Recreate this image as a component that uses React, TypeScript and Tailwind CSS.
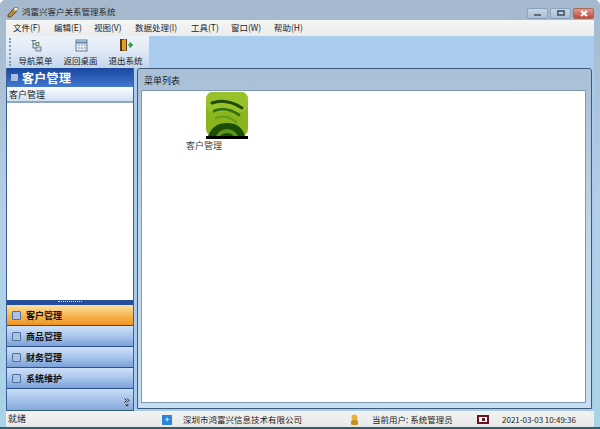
import React from "react";

const F = { fontFamily: '"Noto Sans CJK SC", "Liberation Sans", sans-serif' };

function Menu({ t, w }: { t: string; w: string }) {
  return <span className={`${w} text-[8.5px] leading-[15px] text-[#222] whitespace-nowrap`}>{t}</span>;
}

function Tool({ label, children }: { label: string; children: React.ReactNode }) {
  return (
    <div className="flex w-[45px] flex-col items-center">
      <div className="flex h-[14px] items-end justify-center">{children}</div>
      <span className="mt-[2px] text-[8.5px] leading-[12px] text-[#222] whitespace-nowrap">{label}</span>
    </div>
  );
}

function NavItem({ label, active }: { label: string; active?: boolean }) {
  return (
    <div
      className={`flex h-[21px] items-center border-b border-[#2a4f8f] pl-[5px] ${
        active
          ? "bg-gradient-to-b from-[#fde0a0] via-[#f8b850] to-[#ee9420]"
          : "bg-gradient-to-b from-[#cfe1f8] via-[#a9c6ec] to-[#7ba1da]"
      }`}
    >
      <span className="h-[9px] w-[9px] rounded-[1px] border border-[#4f709f] bg-[#a9c3e4]" />
      <span className="ml-[5px] text-[9px] font-bold leading-none text-[#111]">{label}</span>
    </div>
  );
}

export default function App() {
  return (
    <div style={F} className="flex h-[429px] w-[600px] flex-col overflow-hidden rounded-t-[5px] border-b-2 border-[#2f5f6e] bg-gradient-to-b from-[#a5b8cd] via-[#b4cfe6] to-[#a8d3e8]">
      {/* title bar */}
      <div className="flex h-[20px] shrink-0 items-center pl-[7px] pr-[6px] pt-[3px]">
        <svg width="12" height="12" viewBox="0 0 12 12" className="shrink-0">
          <path d="M1 9 L7 2 L11 2 L10 5 L4 11 L1 11 Z" fill="#b98a3c" stroke="#4a3a20" strokeWidth="0.8" />
          <path d="M7 2 L11 2 L10 5 L7.5 4.5 Z" fill="#e8e4d8" />
        </svg>
        <span className="ml-[3px] text-[8.5px] leading-none text-[#2a2a2a]">鸿富兴客户关系管理系统</span>
        <div className="ml-auto flex items-center gap-[2px] pt-[3px]">
          <div className="flex h-[11px] w-[21px] items-center justify-center rounded-[2px] border border-[#8ca3bd] bg-gradient-to-b from-[#c8d6e6] to-[#a9bdd2]">
            <span className="mt-[3px] h-[2px] w-[7px] bg-[#5a6a7c]" />
          </div>
          <div className="flex h-[11px] w-[21px] items-center justify-center rounded-[2px] border border-[#8ca3bd] bg-gradient-to-b from-[#c8d6e6] to-[#a9bdd2]">
            <span className="h-[6px] w-[8px] border-2 border-[#5a6a7c] bg-[#c8d6e6]" />
          </div>
          <div className="flex h-[11px] w-[21px] items-center justify-center rounded-[2px] border border-[#a8685c] bg-gradient-to-b from-[#e09a8e] to-[#c0493b]">
            <svg width="8" height="7" viewBox="0 0 8 7">
              <path d="M1 1 L7 6 M7 1 L1 6" stroke="#fff" strokeWidth="2" />
            </svg>
          </div>
        </div>
      </div>

      <div className="flex min-h-0 flex-1 flex-col pl-[6px] pr-[6px]">
        {/* menu */}
        <div className="flex h-[16px] shrink-0 bg-gradient-to-b from-[#f5f5f5] to-[#ececec] pl-[7px]">
          <Menu t="文件(F)" w="w-[41px]" />
          <Menu t="编辑(E)" w="w-[40px]" />
          <Menu t="视图(V)" w="w-[41px]" />
          <Menu t="数据处理(I)" w="w-[56px]" />
          <Menu t="工具(T)" w="w-[40px]" />
          <Menu t="窗口(W)" w="w-[43px]" />
          <Menu t="帮助(H)" w="w-[40px]" />
        </div>

        {/* toolbar */}
        <div className="flex h-[32px] shrink-0 bg-[#a9cbee]">
          <div className="flex w-[143px] bg-gradient-to-b from-[#eef3f9] via-[#dfe9f5] to-[#c0d5ec] pl-[1px]">
            <div className="my-[2px] ml-[2px] w-0 border-l-2 border-dotted border-[#8a9ab0]" />
            <div className="ml-[2px] flex pt-[2px]">
              <Tool label="导航菜单">
                <svg width="13" height="13" viewBox="0 0 13 13" className="ml-[2px]">
                  <path d="M1.5 1.5 H6 M3 1.5 V9 H6 M3 5 H6" fill="none" stroke="#5b6f80" strokeWidth="1" />
                  <rect x="6" y="3.5" width="3" height="3" fill="#d8e2d0" stroke="#5b7a58" strokeWidth="0.8" />
                  <rect x="6" y="8" width="5" height="4" fill="#c9dbe8" stroke="#4f6f88" strokeWidth="0.8" />
                </svg>
              </Tool>
              <Tool label="返回桌面">
                <svg width="13" height="13" viewBox="0 0 13 13" className="ml-[1px]">
                  <rect x="1" y="1" width="11" height="11" fill="#e6eef5" stroke="#5f7f9c" />
                  <path d="M1 3.5 H12" stroke="#5f86ad" strokeWidth="2" />
                  <path d="M3 6 h1.5 M6 6 h1.5 M9 6 h1.5 M3 9 h1.5 M6 9 h1.5 M9 9 h1.5" stroke="#6d7d8c" strokeWidth="1.2" />
                </svg>
              </Tool>
              <Tool label="退出系统">
                <svg width="14" height="14" viewBox="0 0 14 14" className="ml-[1px]">
                  <rect x="1" y="1" width="7" height="12" fill="#5a3a14" />
                  <path d="M3 2 L7 1 V13 L3 12 Z" fill="#e0a030" />
                  <path d="M9 7 H12 M10.5 4.5 L13 7 L10.5 9.5" fill="none" stroke="#2f9a3c" strokeWidth="1.6" />
                </svg>
              </Tool>
            </div>
          </div>
        </div>

        {/* main */}
        <div className="flex min-h-0 flex-1 bg-[#a9cbee]">
          {/* left */}
          <div className="flex w-[128px] shrink-0 flex-col border-x border-[#3b5f96] bg-white">
            <div className="flex h-[19px] shrink-0 items-center bg-gradient-to-b from-[#1c479f] via-[#2c5fb8] to-[#4379cf] pl-[4px]">
              <span className="h-[7px] w-[7px] bg-[#a9bfe0]" />
              <span className="ml-[4px] text-[12px] font-bold tracking-[0.3px] leading-none text-white">客户管理</span>
            </div>
            <div className="h-[16px] shrink-0 border-b-2 border-[#8ea6c4] bg-gradient-to-b from-[#ffffff] to-[#cfe0f2] pl-[2px] text-[9px] leading-[15px] text-[#222]">
              客户管理
            </div>
            <div className="min-h-0 flex-1 bg-white" />
            <div className="flex h-[5px] shrink-0 items-start justify-center bg-[#234f9e] pt-[1px]">
              <div className="h-[1px] w-[24px] border-t border-dotted border-[#dfe9f7]" />
            </div>
            <NavItem label="客户管理" active />
            <NavItem label="商品管理" />
            <NavItem label="财务管理" />
            <NavItem label="系统维护" />
            <div className="flex h-[22px] shrink-0 items-end justify-end border-b border-[#2f5f6e] bg-gradient-to-b from-[#c9ddf6] to-[#86a9dd] pb-[3px] pr-[3px]">
              <svg width="6" height="9" viewBox="0 0 6 9">
                <path d="M0.5 0.5 L2.5 2.5 L0.5 4.5 M3 0.5 L5 2.5 L3 4.5" fill="none" stroke="#222" strokeWidth="1" />
                <path d="M1 6.5 H5 L3 8.5 Z" fill="#222" />
              </svg>
            </div>
          </div>

          {/* right */}
          <div className="ml-[3px] mr-[2px] mb-[2px] flex min-w-0 flex-1 flex-col rounded-t-[3px] border border-[#3f5a78] bg-gradient-to-b from-[#a9bfd6] via-[#c3d6ea] to-[#c8ddf2] pl-[3px] pr-[5px] pb-[5px]">
            <div className="h-[21px] shrink-0 pl-[3px] text-[9px] leading-[23px] text-[#222]">菜单列表</div>
            <div className="relative min-h-0 flex-1 border border-[#7f98b4] bg-white">
              <div className="absolute left-[64px] top-[1px] flex w-[42px] flex-col items-center">
                <svg width="42" height="47" viewBox="0 0 42 47">
                  <rect x="0" y="0" width="42" height="44" rx="7" fill="#8ab51f" />
                  <rect x="0" y="0" width="42" height="20" rx="7" fill="#98c22c" />
                  <path d="M6 11 Q20 6 36 16" fill="none" stroke="#1f4d06" strokeWidth="3" strokeLinecap="round" />
                  <path d="M8 19 Q20 14 33 23" fill="none" stroke="#356f10" strokeWidth="2.8" strokeLinecap="round" />
                  <path d="M10 26 Q21 22 30 30" fill="none" stroke="#6a9e1a" strokeWidth="2.5" strokeLinecap="round" />
                  <path d="M2 44 Q7 31 21 31 Q35 31 39 44 Z" fill="#1c4d05" />
                  <path d="M10 44 Q14 37 21 37 Q28 37 32 44 Z" fill="#5c9418" />
                  <path d="M14 44 Q17 41 21 41 Q25 41 28 44 Z" fill="#1c4d05" />
                  <rect x="0" y="44" width="42" height="3" fill="#000" />
                </svg>
              </div>
              <span className="absolute left-[44px] top-[49px] text-[9px] leading-[11px] text-[#444] whitespace-nowrap">客户管理</span>
            </div>
          </div>
        </div>

        {/* status */}
        <div className="flex h-[16px] shrink-0 items-center bg-gradient-to-b from-[#f3f3f3] to-[#e8e8e8] pt-[1px] text-[8.5px] leading-none text-[#222]">
          <span className="mb-[2px] w-[156px] shrink-0 pl-[2px] text-[9px]">就绪</span>
          <span className="flex h-[10px] w-[10px] shrink-0 items-center justify-center bg-[#2f86d8] text-[7px] font-bold text-white">+</span>
          <span className="ml-[11px] w-[167px] shrink-0 whitespace-nowrap">深圳市鸿富兴信息技术有限公司</span>
          <svg width="9" height="11" viewBox="0 0 9 11" className="shrink-0">
            <circle cx="4.5" cy="3.5" r="3" fill="#e8b23a" />
            <rect x="1" y="6" width="7" height="5" rx="1.5" fill="#c98f25" />
          </svg>
          <span className="ml-[13px] w-[105px] shrink-0 whitespace-nowrap">当前用户: 系统管理员</span>
          <span className="flex h-[9px] w-[12px] shrink-0 items-center justify-center border-2 border-[#6a1420] bg-white">
            <span className="h-[3px] w-[3px] bg-[#6a1420]" />
          </span>
          <span className="ml-[13px] whitespace-nowrap text-[8px]">2021-03-03 10:49:36</span>
        </div>
      </div>
    </div>
  );
}
